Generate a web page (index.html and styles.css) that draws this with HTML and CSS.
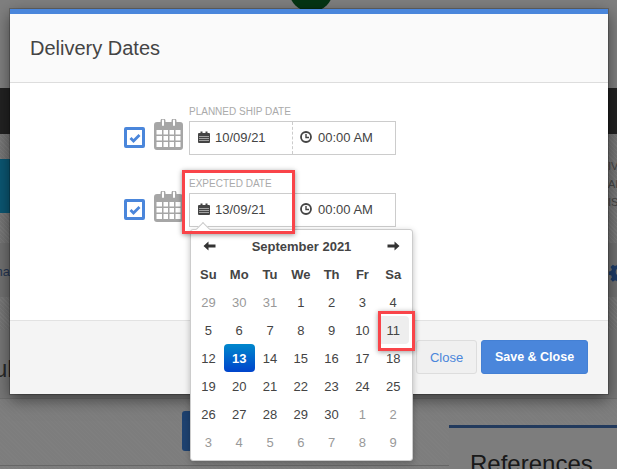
FILE: index.html
```html
<!DOCTYPE html>
<html lang="en">
<head>
<meta charset="utf-8">
<title>Delivery Dates</title>
<link rel="stylesheet" href="styles.css">
</head>
<body>
<div class="page">
  <div class="top"><span class="logo"></span></div>
  <div class="nav"></div>
  <div class="hero">
    <div class="teal"></div>
    <div class="hero-text"><span>IV</span><span>AI</span><span>IS</span></div>
  </div>
  <div class="band">
    <span class="band-text">cha</span>
    <svg class="gear" viewBox="0 0 24 24"><path fill="#3c78d0" fill-rule="evenodd" d="M10 1h4l.6 3 2.200.9 2.600-1.700 2.800 2.800-1.700 2.600.9 2.200 3 .6v4l-3 .6-.9 2.200 1.700 2.600-2.800 2.800-2.600-1.700-2.200.9-.6 3h-4l-.6-3-2.200-.9-2.600 1.700-2.800-2.800 1.700-2.600-.9-2.200-3-.6v-4l3-.6.9-2.200-1.700-2.600 2.800-2.800 2.600 1.700 2.200-.9zM12 8a4 4 0 1 0 0 8 4 4 0 0 0 0-8z"/></svg>
  </div>
  <div class="strip"></div>
  <div class="lower-top"><span class="lower-text">ul</span></div>
  <div class="lower-bottom">
    <div class="lower-main"><span class="dark-btn"></span></div>
    <div class="refs"><h2>References</h2></div>
  </div>
</div>
<div class="backdrop"></div>
<section class="modal">
  <header class="modal-head"><h1>Delivery Dates</h1></header>
  <div class="modal-body">
    <div class="date-row">
      <span class="check"><svg viewBox="0 0 12 10"><path d="M1.500 5l3 3 6-6" fill="none" stroke="#4a86db" stroke-width="2.800"/></svg></span>
      <svg class="cal-big" viewBox="0 0 29 31"><use href="#calbig"/></svg>
      <div class="field">
        <label>PLANNED SHIP DATE</label>
        <div class="inputs">
          <div class="part date dashed"><svg class="ico" viewBox="0 0 12 12"><use href="#calsmall"/></svg>10/09/21</div>
          <div class="part time"><svg class="ico" viewBox="0 0 12 12"><use href="#clock"/></svg>00:00 AM</div>
        </div>
      </div>
    </div>
    <div class="date-row">
      <span class="check"><svg viewBox="0 0 12 10"><path d="M1.500 5l3 3 6-6" fill="none" stroke="#4a86db" stroke-width="2.800"/></svg></span>
      <svg class="cal-big" viewBox="0 0 29 31"><use href="#calbig"/></svg>
      <div class="field">
        <label>EXPECTED DATE</label>
        <div class="inputs">
          <div class="part date"><svg class="ico" viewBox="0 0 12 12"><use href="#calsmall"/></svg>13/09/21</div>
          <div class="part time"><svg class="ico" viewBox="0 0 12 12"><use href="#clock"/></svg>00:00 AM</div>
        </div>
      </div>
    </div>
  </div>
  <footer class="modal-foot">
    <button class="btn btn-close">Close</button>
    <button class="btn btn-save">Save &amp; Close</button>
  </footer>
</section>
<div class="picker">
  <div class="arrow"></div>
  <div class="picker-head">
    <svg class="nav-arrow" viewBox="0 0 12 10"><path d="M0 5l5-4.500v3h7v3H5v3z"/></svg>
    <strong>September 2021</strong>
    <svg class="nav-arrow" viewBox="0 0 12 10"><path d="M12 5L7 .5v3H0v3h7v3z"/></svg>
  </div>
  <div class="cal-grid">
    <b>Su</b><b>Mo</b><b>Tu</b><b>We</b><b>Th</b><b>Fr</b><b>Sa</b>
    <span class="old">29</span><span class="old">30</span><span class="old">31</span><span>1</span><span>2</span><span>3</span><span>4</span>
    <span>5</span><span>6</span><span>7</span><span>8</span><span>9</span><span>10</span><span class="hover">11</span>
    <span>12</span><span class="active">13</span><span>14</span><span>15</span><span>16</span><span>17</span><span>18</span>
    <span>19</span><span>20</span><span>21</span><span>22</span><span>23</span><span>24</span><span>25</span>
    <span>26</span><span>27</span><span>28</span><span>29</span><span>30</span><span class="old">1</span><span class="old">2</span>
    <span class="old">3</span><span class="old">4</span><span class="old">5</span><span class="old">6</span><span class="old">7</span><span class="old">8</span><span class="old">9</span>
  </div>
</div>
<div class="mark mark-date"></div>
<div class="mark mark-day"></div>
<svg class="defs" width="0" height="0">
  <defs>
    <g id="calbig">
      <path fill="#a6a6a6" fill-rule="evenodd" d="M3 3h3.500V2a2.500 2.500 0 0 1 5 0v1h6V2a2.500 2.500 0 0 1 5 0v1H26a3 3 0 0 1 3 3v22a3 3 0 0 1-3 3H3a3 3 0 0 1-3-3V6a3 3 0 0 1 3-3zM8 1.500V6a1 1 0 0 0 2 0V1.500a1 1 0 0 0-2 0zM19 1.500V6a1 1 0 0 0 2 0V1.500a1 1 0 0 0-2 0zM2.500 11v4.500H8V11zM9.500 11v4.500h4.500V11zM15.500 11v4.500H20V11zM21.500 11v4.500h5V11zM2.500 17v4.500H8V17zM9.500 17v4.500h4.500V17zM15.500 17v4.500H20V17zM21.500 17v4.500h5V17zM2.500 23v5H8v-5zM9.500 23v5h4.500v-5zM15.500 23v5H20v-5zM21.500 23v5h5v-5z"/>
    </g>
    <g id="calsmall">
      <path fill="#444" fill-rule="evenodd" d="M1 2h1.500V.5h2V2h3V.5h2V2H11a1 1 0 0 1 1 1v8a1 1 0 0 1-1 1H1a1 1 0 0 1-1-1V3a1 1 0 0 1 1-1zM1.500 5v1h1V5zM3.500 5v1h1V5zM5.500 5v1h1V5zM7.500 5v1h1V5zM9.500 5v1h1V5zM1.500 7v1h1V7zM3.500 7v1h1V7zM5.500 7v1h1V7zM7.500 7v1h1V7zM9.500 7v1h1V7zM1.500 9v1h1V9zM3.500 9v1h1V9zM5.500 9v1h1V9zM7.500 9v1h1V9zM9.500 9v1h1V9z"/>
    </g>
    <g id="clock">
      <circle cx="6" cy="6" r="5" fill="none" stroke="#444" stroke-width="1.800"/>
      <path d="M6 3v3.500h3" fill="none" stroke="#444" stroke-width="1.400"/>
    </g>
  </defs>
</svg>
</body>
</html>
```
FILE: styles.css
```css
* { box-sizing: border-box; }
html, body { margin: 0; height: 469px; overflow: hidden; }
body { position: relative; width: 617px; font-family: "Liberation Sans", Arial, sans-serif; color: #444; background: #fff; }
.page { display: flex; flex-direction: column; height: 469px; overflow: hidden; background: #fff; }
.top { height: 88px; flex: none; background: #fff; display: flex; justify-content: center; }
.logo { width: 44px; height: 44px; margin-top: -32px; border-radius: 50%; background: #0a6a28; transform: translateX(2px); }
.nav { height: 46px; flex: none; background: #444; }
.hero { height: 109px; flex: none; padding: 25px 0 30px; display: flex; justify-content: space-between;
  background: repeating-linear-gradient(45deg, #f8f8f8 0 1px, #ececec 1px 3px); }
.teal { width: 100px; height: 54px; background: #17aee6; }
.hero-text { display: flex; flex-direction: column; gap: 4px; font-size: 11px; line-height: 14px; width: 9px; color: #888; overflow: hidden; }
.band { height: 54px; flex: none; padding-top: 3px; background: #e2e2e2; display: flex; justify-content: space-between; align-items: center; font-size: 13px; color: #4a6ea8; overflow: hidden; }
.band-text { margin-left: -11px; }
.gear { width: 20px; height: 20px; margin-right: -12px; }
.strip { height: 33px; flex: none; background: repeating-linear-gradient(45deg, #f8f8f8 0 1px, #ececec 1px 3px); }
.lower-top { height: 69px; flex: none; background: #eee; border-bottom: 1px solid #ddd; padding-top: 25px; font-size: 24px; line-height: 28px; color: #555; overflow: hidden; }
.lower-text { display: block; margin-left: -6px; }
.lower-bottom { flex: 1; display: flex; align-items: flex-start; background: repeating-linear-gradient(45deg, #ffffff 0 1px, #fbfbfb 1px 3px); }
.lower-main { width: 449px; height: 67px; flex: none; padding: 12px 0 0 182px; border-bottom: 1px solid #ccc; }
.dark-btn { display: block; width: 40px; height: 40px; background: #3c84e0; border-radius: 3px; }
.refs { flex: 1; margin-top: 26px; border-top: 3px solid #4475ba; background: #fbfbfb; padding: 23px 0 0 21px; }
.refs h2 { margin: 0; font-size: 24px; line-height: 26px; font-weight: 400; color: #333; white-space: nowrap; }
.backdrop { position: absolute; inset: 0; background: rgba(0, 0, 0, .5); }

.modal { position: absolute; left: 10px; top: 9px; width: 598px; height: 385px; display: flex; flex-direction: column; background: #fff; border-top: 5px solid #4a86db; box-shadow: 0 0 0 1px rgba(0, 0, 0, .2), 0 5px 15px rgba(0, 0, 0, .5); }
.modal-head { height: 69px; flex: none; padding-left: 20px; background: #fafafa; border-bottom: 1px solid #ddd; display: flex; align-items: center; }
.modal-head h1 { margin: 0; font-size: 20px; font-weight: 400; color: #444; }
.modal-body { flex: 1; padding: 22px 0 0 114px; display: flex; flex-direction: column; gap: 22px; }
.date-row { display: flex; align-items: flex-end; }
.check { width: 21px; height: 21px; margin: 0 9px 7px 0; border: 3px solid #4a86db; border-radius: 2px; display: flex; align-items: center; justify-content: center; background: #fff; }
.check svg { width: 12px; height: 10px; }
.cal-big { width: 29px; height: 31px; margin: 0 6px 5px 0; }
.field { display: flex; flex-direction: column; }
.field label { font-size: 10px; line-height: 13px; color: #aaa; margin-bottom: 3px; }
.inputs { width: 207px; height: 34px; border: 1px solid #ccc; display: flex; font-size: 13px; color: #444; background: #fff; }
.part { flex: 1; display: flex; align-items: center; padding: 0 0 2px 8px; gap: 5px; }
.date { flex: none; width: 103px; }
.time { padding-left: 7px; gap: 6px; }
.dashed { border-right: 1px dashed #ccc; }
.ico { width: 12px; height: 12px; }
.modal-foot { height: 74px; flex: none; background: #f4f4f4; border-top: 1px solid #e2e2e2; padding: 19px 20px 0 0; display: flex; justify-content: flex-end; gap: 4px; }
.btn { height: 34px; font-family: inherit; font-size: 13px; border-radius: 3px; padding: 0; }
.btn-close { width: 61px; background: #f0f0f0; border: 1px solid #ddd; color: #4a86db; }
.btn-save { width: 107px; background: #4a86db; border: 1px solid #4480d4; color: #fff; font-size: 12.500px; font-weight: 700; }

.picker { position: absolute; left: 190px; top: 229px; width: 223px; height: 232px; background: #fff; border: 1px solid #ccc; border-radius: 3px; box-shadow: 0 2px 6px rgba(0, 0, 0, .25); padding: 3px 2px 0; font-size: 13px; color: #444; }
.arrow { position: absolute; left: 7px; top: -6px; width: 10px; height: 10px; background: #fff; border: 1px solid #ccc; border-right: 0; border-bottom: 0; transform: rotate(45deg); }
.picker-head { height: 26px; display: flex; align-items: center; justify-content: space-between; padding: 0 10px; position: relative; }
.picker-head strong { font-size: 13px; color: #444; }
.nav-arrow { width: 13px; height: 10px; fill: #333; }
.cal-grid { display: grid; grid-template-columns: repeat(7, 30.800px); grid-auto-rows: 28px; margin-top: 1px; text-align: center; }
.cal-grid b, .cal-grid span { display: flex; align-items: center; justify-content: center; border-radius: 4px; }
.cal-grid b { color: #444; }
.old { color: #999; }
.hover { background: #eee; }
.active { background: linear-gradient(#0088cc, #0044cc); color: #fff; font-weight: 700; }

.mark { position: absolute; border: 3px solid #f94449; box-shadow: 0 1px 5px rgba(0, 0, 0, .4); }
.mark-date { left: 182px; top: 170px; width: 113px; height: 64px; }
.mark-day { left: 378px; top: 311px; width: 37px; height: 40px; }
.defs { position: absolute; }
```
